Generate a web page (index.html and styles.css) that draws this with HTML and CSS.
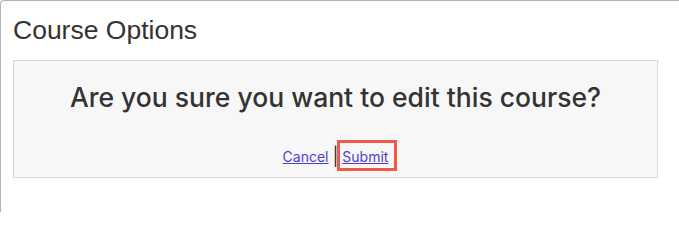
FILE: index.html
```html
<!DOCTYPE html>
<html lang="en">
<head>
<meta charset="utf-8">
<title>Course Options</title>
<link rel="stylesheet" href="styles.css">
</head>
<body>
<section class="panel">
  <h2 class="panel-title">Course Options</h2>
  <div class="confirm-box">
    <p class="confirm-question">Are you sure you want to edit this course?</p>
    <div class="confirm-actions">
      <a href="#" class="action-link">Cancel</a> <span class="sep">|</span> <a href="#" class="action-link highlighted">Submit</a>
    </div>
  </div>
</section>
</body>
</html>
```

FILE: styles.css
```css
html, body {
  margin: 0;
  padding: 0;
  background: #ffffff;
}

body {
  width: 679px;
  height: 212px;
  overflow: hidden;
}

.panel {
  box-sizing: border-box;
  width: 100%;
  height: 212px;
  border-top: 1px solid #b3b3bb;
  border-left: 1px solid #b3b3bb;
  border-top-left-radius: 4px;
  padding: 14px 21px 0 12px;
  box-shadow: inset 0 6px 6px -6px rgba(0, 0, 0, 0.06);
}

.panel-title {
  margin: 0;
  font-family: "Liberation Sans", Arial, sans-serif;
  font-weight: 400;
  font-size: 26.5px;
  line-height: 30px;
  color: #333333;
}

.confirm-box {
  margin-top: 15px;
  border: 1px solid #ddd4d7;
  background: #f7f7f7;
  padding: 20px 0 0;
  height: 118px;
  box-sizing: border-box;
  text-align: center;
}

.confirm-question {
  margin: 0;
  font-family: Inter, "Noto Sans", sans-serif;
  font-weight: 500;
  font-size: 26.5px;
  line-height: 32px;
  color: #333333;
}

.confirm-actions {
  margin-top: 35px;
  font-family: Inter, "Noto Sans", sans-serif;
  font-size: 14px;
  line-height: 17px;
  color: #333333;
}

.action-link {
  color: #4b3fd0;
  text-decoration: underline;
}

.sep {
  font-size: 18px;
  color: #333333;
  vertical-align: -1px;
}

.highlighted {
  position: relative;
}

.highlighted::after {
  content: "";
  position: absolute;
  left: -5px;
  right: -9px;
  top: -8px;
  bottom: -6px;
  border: 3px solid #f4584a;
  pointer-events: none;
}
```
